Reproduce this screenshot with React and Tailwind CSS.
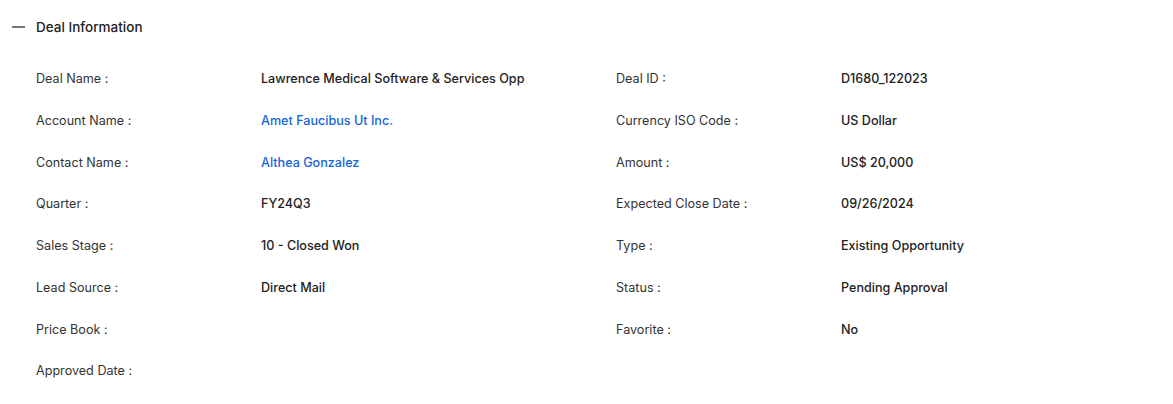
import React from "react";

const left = [
  ["Deal Name :", "Lawrence Medical Software & Services Opp"],
  ["Account Name :", "Amet Faucibus Ut Inc.", true],
  ["Contact Name :", "Althea Gonzalez", true],
  ["Quarter :", "FY24Q3"],
  ["Sales Stage :", "10 - Closed Won"],
  ["Lead Source :", "Direct Mail"],
  ["Price Book :", ""],
  ["Approved Date :", ""],
];
const right = [
  ["Deal ID :", "D1680_122023"],
  ["Currency ISO Code :", "US Dollar"],
  ["Amount :", "US$ 20,000"],
  ["Expected Close Date :", "09/26/2024"],
  ["Type :", "Existing Opportunity"],
  ["Status :", "Pending Approval"],
  ["Favorite :", "No"],
];

function Field({ label, value, link }) {
  return (
    <div className="flex items-center h-[41.7px]">
      <div className="w-[225px] shrink-0 text-[12.6px] text-[#333333]">{label}</div>
      <div className={"text-[12.6px] font-medium " + (link ? "text-[#1565d8]" : "text-[#222222]")}>{value}</div>
    </div>
  );
}

export default function App() {
  return (
    <div className="w-[1173px] h-[404px] bg-white overflow-hidden" style={{ fontFamily: "Inter, 'Noto Sans', sans-serif" }}>
      <div className="flex items-center h-[54px] pl-[12px]">
        <span className="block w-[13px] h-[1.5px] bg-[#777777]"></span>
        <span className="ml-[11px] text-[13.5px] font-medium text-[#222222]">Deal Information</span>
      </div>
      <div className="flex pl-[36px] pt-[5px]">
        <div className="w-[580px] shrink-0">
          {left.map(([l, v, link]) => (
            <Field key={l} label={l} value={v} link={link} />
          ))}
        </div>
        <div className="w-[557px] shrink-0">
          {right.map(([l, v, link]) => (
            <Field key={l} label={l} value={v} link={link} />
          ))}
        </div>
      </div>
    </div>
  );
}
